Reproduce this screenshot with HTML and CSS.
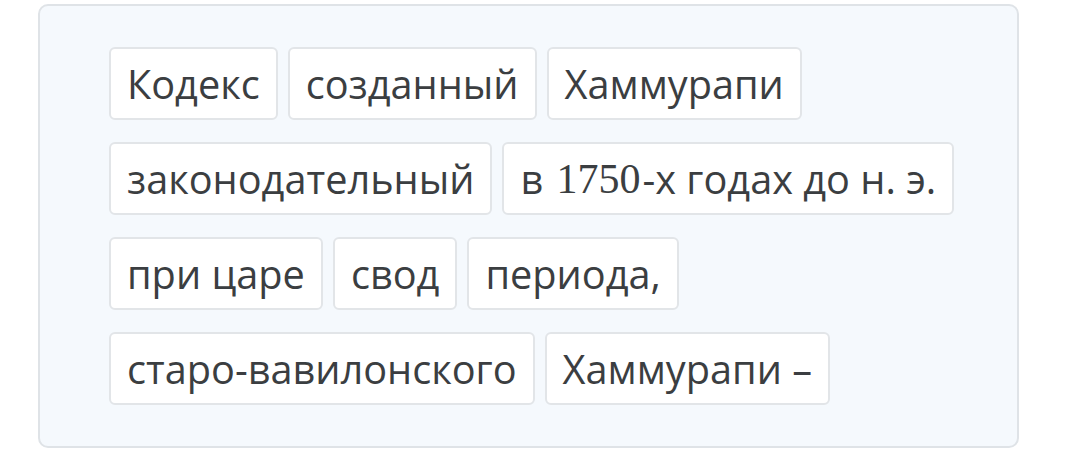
FILE: index.html
```html
<!DOCTYPE html>
<html lang="ru">
<head>
    <meta charset="UTF-8">
    <title>Слова</title>
    <link rel="stylesheet" href="styles.css">
</head>
<body>

<div class="word-bank">
    <span class="word">Кодекс</span>
    <span class="word">созданный</span>
    <span class="word">Хаммурапи</span>
    <span class="word">законодательный</span>
    <span class="word">в <span class="num">1750</span>-х годах до н. э.</span>
    <span class="word">при царе</span>
    <span class="word">свод</span>
    <span class="word">периода,</span>
    <span class="word">старо-вавилонского</span>
    <span class="word">Хаммурапи –</span>
</div>

</body>
</html>
```

FILE: styles.css
```css
body {
    margin: 0;
    background: #ffffff;
    font-family: "Open Sans", sans-serif;
    color: #3b3e41;
}
.word-bank {
    box-sizing: border-box;
    width: 981px;
    height: 444px;
    margin: 4px 0 0 38px;
    padding: 41px 50px 40px 69px;
    background: #f5f9fd;
    border: 2px solid #dfe3e7;
    border-radius: 10px;
    display: flex;
    flex-wrap: wrap;
    align-content: flex-start;
    gap: 22px 10px;
}
.word {
    box-sizing: border-box;
    height: 73px;
    padding: 0 16px;
    display: flex;
    align-items: center;
    background: #ffffff;
    border: 2px solid #e2e5e8;
    border-radius: 6px;
    font-size: 39.7px;
    white-space: pre;
}
.num {
    margin: 0 2px 0 3px;
    font-family: "Liberation Serif", serif;
    font-size: 42px;
}
```
